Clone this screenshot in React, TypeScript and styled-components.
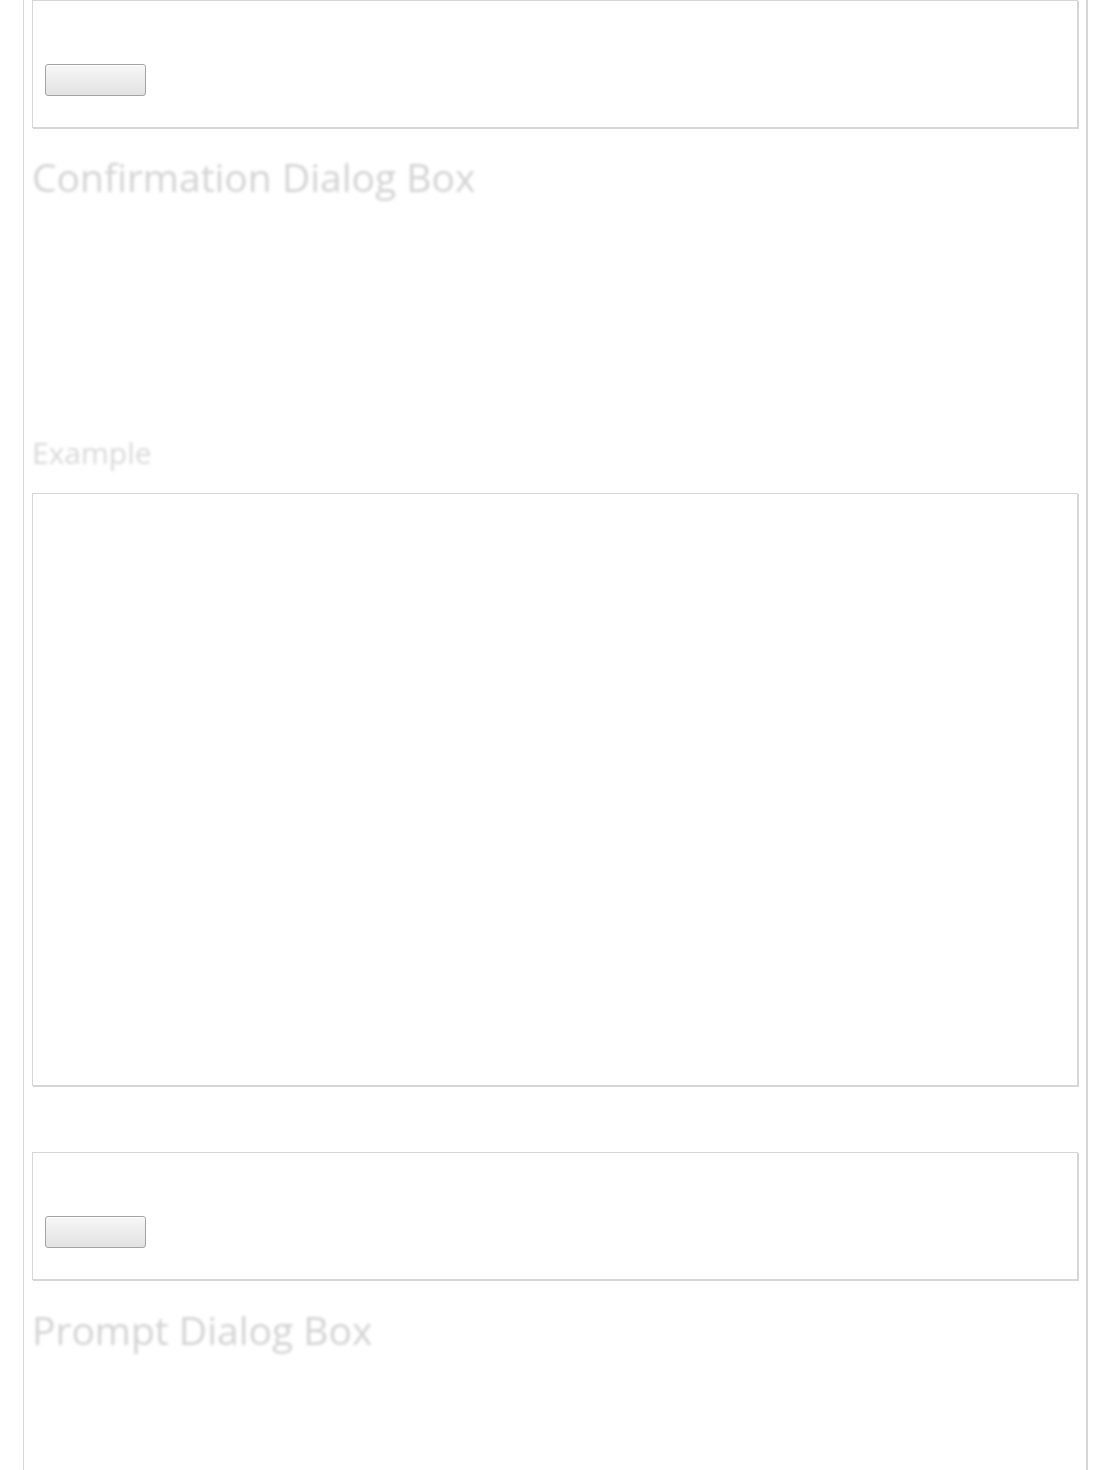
import styled, { createGlobalStyle } from "styled-components";

const GlobalStyle = createGlobalStyle`
  html, body {
    margin: 0;
    padding: 0;
    background: #fff;
    font-family: "Open Sans", "Liberation Sans", sans-serif;
  }
`;

const Page = styled.div`
  width: 1110px;
  height: 1470px;
  overflow: hidden;
`;

const Column = styled.div`
  box-sizing: border-box;
  margin-left: 23px;
  width: 1065px;
  min-height: 1470px;
  border-left: 1px solid #d6d6d6;
  border-right: 2px solid #d6d6d6;
  padding: 0 8px;
`;

const Card = styled.div<{ $height: number }>`
  height: ${(p) => p.$height}px;
  width: 1046px;
  border: 1px solid #d6d6d6;
  box-shadow: 1px 1px 0 #d6d6d6;
  box-sizing: border-box;
  padding: 0 12px 31px;
  display: flex;
  flex-direction: column;
  justify-content: flex-end;
`;

const TryButton = styled.button`
  width: 101px;
  height: 32px;
  border: 1px solid #a3a3a3;
  border-radius: 3px;
  background: linear-gradient(#f7f7f7, #e2e2e2);
  box-shadow: inset 0 1px 0 #fff;
  padding: 0;
`;

const Heading = styled.h2`
  margin: 0;
  font-weight: 400;
  font-size: 39px;
  line-height: 1;
  color: #d3d3d3;
  filter: blur(1.4px);
  white-space: nowrap;
`;

const SubHeading = styled.h3`
  margin: 0;
  font-weight: 400;
  font-size: 30px;
  line-height: 1;
  color: #d8d8d8;
  filter: blur(1.4px);
`;

const Spacer = styled.div<{ $h: number }>`
  height: ${(p) => p.$h}px;
`;

export default function App() {
  return (
    <Page>
      <GlobalStyle />
      <Column>
        <Card $height={128}>
          <TryButton aria-label="Try it" />
        </Card>
        <Spacer $h={29} />
        <Heading>Confirmation Dialog Box</Heading>
        <Spacer $h={242} />
        <SubHeading>Example</SubHeading>
        <Spacer $h={25} />
        <Card $height={593} />
        <Spacer $h={66} />
        <Card $height={128}>
          <TryButton aria-label="Try it" />
        </Card>
        <Spacer $h={30} />
        <Heading>Prompt Dialog Box</Heading>
      </Column>
    </Page>
  );
}
